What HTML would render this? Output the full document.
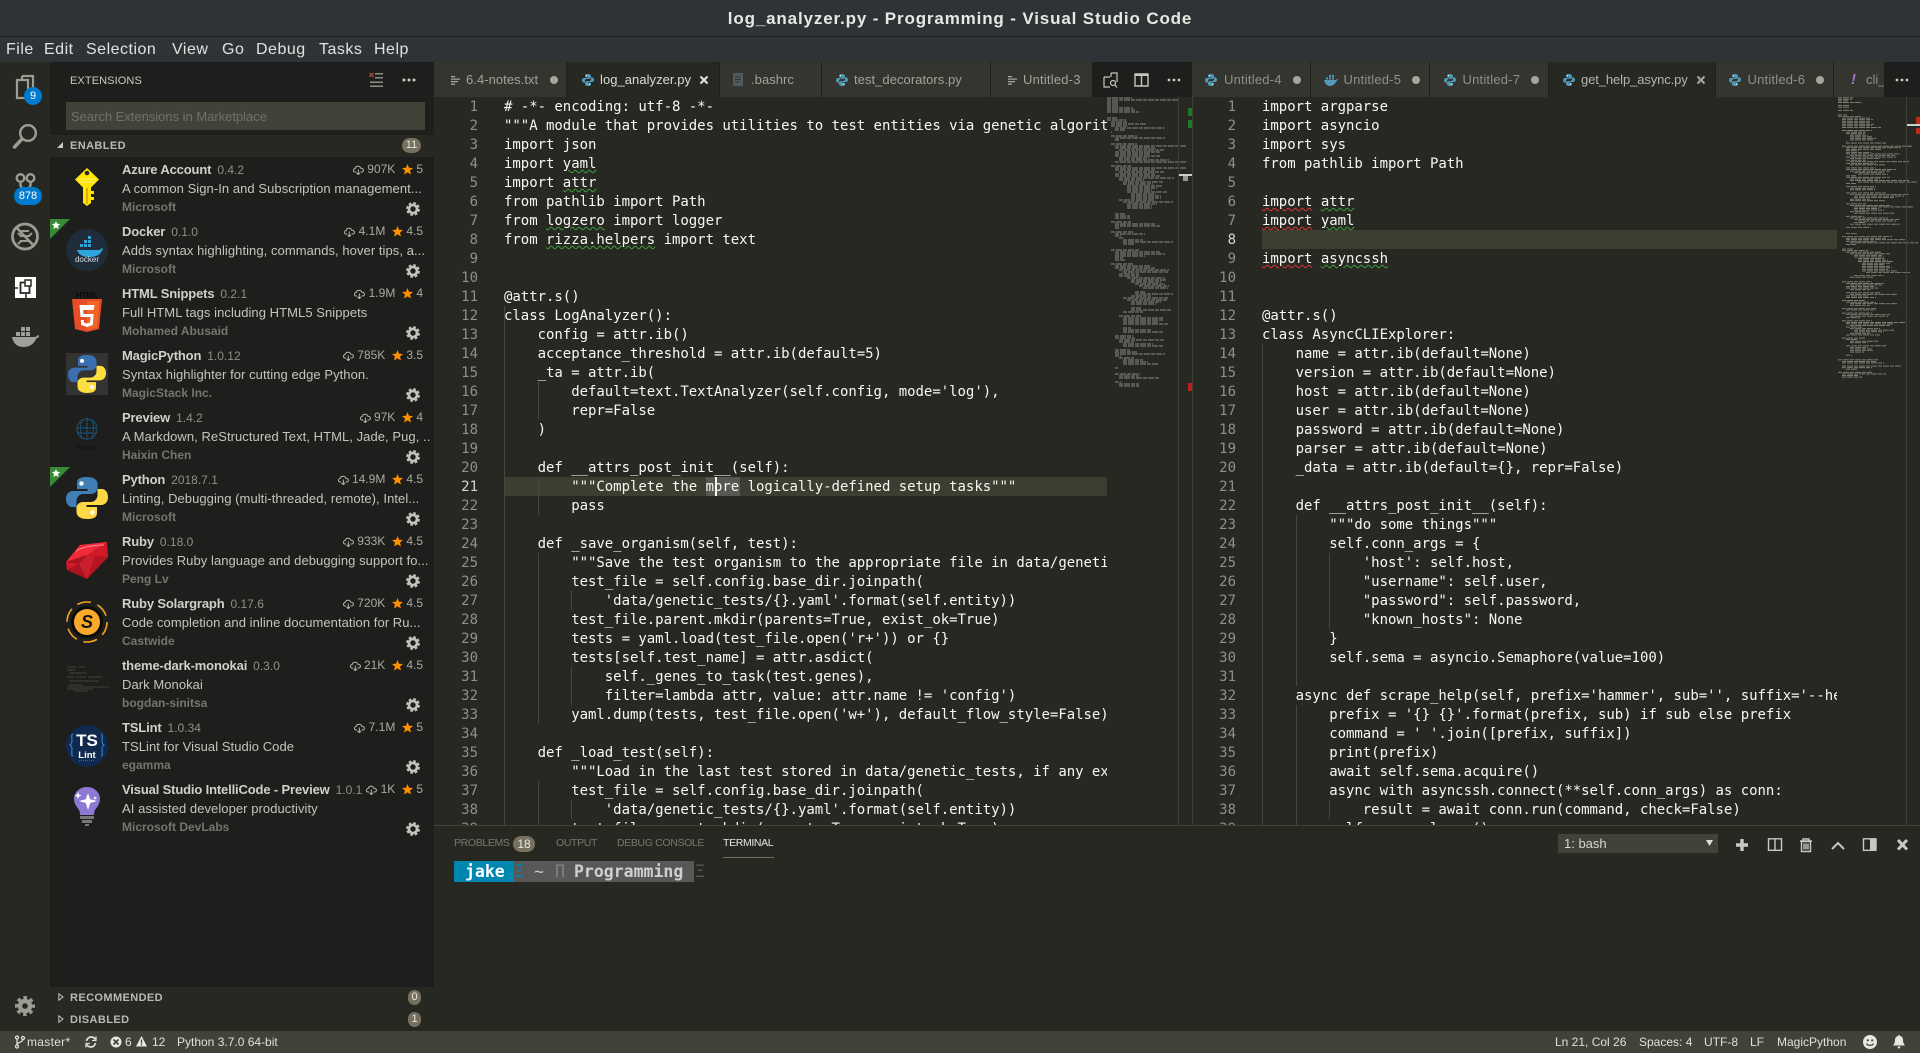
<!DOCTYPE html>
<html><head><meta charset="utf-8"><title>log_analyzer.py - Programming - Visual Studio Code</title>
<style>
*{box-sizing:border-box}
html,body{margin:0;padding:0;width:1920px;height:1053px;overflow:hidden;background:#272822;font-family:"Liberation Sans",sans-serif}
.a{position:absolute;white-space:nowrap}
svg{position:absolute;overflow:visible}
.menu{top:37px;height:25px;line-height:25px;font-size:16px;letter-spacing:.5px;color:#e0e2df}
.tab{top:62px;height:35px;background:#34352f}
.tt{top:62px;height:35px;line-height:35px;font-size:13px;color:#a3a39b;letter-spacing:.05px}
.tr{color:#90908a}
.act{background:#272822}
.dot{top:76px;width:8px;height:8px;border-radius:50%;background:#a6a69e}
.code{margin:0;font:14px/19px "DejaVu Sans Mono",monospace;color:#f8f8f2;letter-spacing:-.03px;white-space:pre}
.ln{margin:0;font:14px/19px "DejaVu Sans Mono",monospace;color:#90908a;text-align:right;white-space:pre}
.g{text-decoration:underline wavy #3f9f3f 1px;text-underline-offset:1px}
.r{text-decoration:underline wavy #d33 1px;text-underline-offset:1px}
.guide{position:absolute;width:1px;background:#464741}
.ext{position:absolute;left:50px;width:384px;height:62px}
.nm{position:absolute;left:72px;top:3px;line-height:19px;font-size:13px;font-weight:bold;color:#cfcfcb;white-space:nowrap;letter-spacing:-.15px}
.nm i{font-style:normal;font-weight:normal;font-size:12px;color:#8f8f88;margin-left:6px;letter-spacing:0}
.ds{position:absolute;left:72px;top:22px;line-height:19px;width:308px;font-size:13px;color:#c4c4bf;white-space:nowrap;overflow:hidden;letter-spacing:.06px}
.pb{position:absolute;left:72px;top:41px;line-height:19px;font-size:12px;font-weight:bold;color:#75756f;white-space:nowrap}
.st{position:absolute;right:11px;top:3px;line-height:19px;font-size:12px;color:#a9a9a3;white-space:nowrap;display:flex;align-items:center}
.st svg{position:static}
.gear{position:absolute;left:356px;top:45px}
.hd{left:70px;font-size:11px;font-weight:bold;color:#b9b9b3;letter-spacing:.4px;line-height:22px;height:22px}
.bd{border-radius:10px;background:#75715e;color:#e9e9e2;font-size:11px;text-align:center}
.sb{top:1031px;height:22px;line-height:22px;font-size:12px;color:#e0e0da}
.pt{top:834px;height:19px;line-height:19px;font-size:10.5px;letter-spacing:-.35px;color:#78786e}
.term{font:bold 16.5px/21px "DejaVu Sans Mono",monospace;top:861px;height:21px}
</style></head>
<body>
<svg width="0" height="0" style="position:absolute">
<defs>
<symbol id="py" viewBox="0 0 42 42"><path d="M21 0C11 0 11 4 11 7v5h10.500v2H7c-4 0-7 3-7 8s3 8 6 8h4.500v-6c0-4 3-7 7-7h7.500c3.500 0 6.500-2.500 6.500-6V7c0-4-3.500-7-10.500-7z"/><circle cx="15.500" cy="6.500" r="2.200" fill="#fff"/></symbol>
<symbol id="gr" viewBox="0 0 14 14"><circle cx="7" cy="7" r="5.600" fill="none" stroke="#c2c2be" stroke-width="2.600" stroke-dasharray="2.600 1.800"/><circle cx="7" cy="7" r="4" fill="none" stroke="#c2c2be" stroke-width="2.600"/></symbol>
<symbol id="cl" viewBox="0 0 11 10"><path d="M3 7H2.300C1 7 .5 6 .5 5.200S1.200 3.500 2.200 3.500C2.500 2 3.500 1.300 5 1.300S7.500 2.200 7.800 3.300C9.500 3.200 10.500 4.200 10.500 5.300S9.500 7 8.500 7H7.500M5.300 4.500V9.500M3.500 7.800L5.300 9.600 7 7.800" fill="none" stroke="#b5b5b0" stroke-width="1"/></symbol>
<symbol id="sr" viewBox="0 0 11 11"><path d="M5.500 0l1.500 3.700 4 .3-3 2.600 1 3.900-3.500-2.100L2 10.500l1-3.900L0 4l4-.3z" fill="#ff8e00"/></symbol>
<symbol id="tl" viewBox="0 0 10 10"><path d="M0 1h4v1.300H0zM0 3.500h9v1.300H0zM0 6h7v1.300H0zM0 8.500h4v1.300H0z" fill="#a8a8a0"/></symbol>
</defs>
</svg>

<!-- title and menu -->
<div class="a" style="left:0;top:0;width:1920px;height:36px;background:#2e3436"></div>
<div class="a" style="left:0;top:36px;width:1920px;height:1px;background:#1b1d1e"></div>
<div class="a" style="left:0;top:37px;width:1920px;height:25px;background:#2e3436"></div>
<div class="a" style="left:0;top:0;width:1920px;height:37px;line-height:37px;text-align:center;font-size:17px;font-weight:bold;letter-spacing:.85px;color:#e8e8e4">log_analyzer.py - Programming - Visual Studio Code</div>
<div class="a menu" style="left:6px">File</div><div class="a menu" style="left:44px">Edit</div><div class="a menu" style="left:86px">Selection</div><div class="a menu" style="left:172px">View</div><div class="a menu" style="left:222px">Go</div><div class="a menu" style="left:256px">Debug</div><div class="a menu" style="left:319px">Tasks</div><div class="a menu" style="left:374px">Help</div>

<!-- activity bar -->
<div class="a" style="left:0;top:62px;width:50px;height:969px;background:#272822"></div>
<svg style="left:0;top:62px" width="50" height="969" viewBox="0 62 50 969" fill="none" stroke="#9c9c95">
<path d="M22 76h11v20H26M22 76v4M17 80h11v18H17z" stroke-width="2.200"/>
<circle cx="28" cy="133" r="7.800" stroke-width="2.400"/><path d="M22 139l-7.500 8" stroke-width="3.500" stroke-linecap="round"/>
<circle cx="20.500" cy="178" r="3.800" stroke-width="2.400"/><circle cx="30.500" cy="178" r="3.800" stroke-width="2.400"/><path d="M20.500 181v4c0 2 2 3 3 4M30.500 181v4c0 2-2 3-3 4" stroke-width="2.400"/>
<circle cx="25" cy="236.500" r="12.500" stroke-width="2.800"/><path d="M16 227l18 19" stroke-width="2.500"/><path d="M21 231h8M20 236h10M20 241h10M18 233l3 3M32 233l-3 3M18 244l3-3M32 244l-3-3" stroke-width="2"/>
<path d="M15 277h21v21H15z" fill="#fff" stroke="none"/><path d="M20.500 282.500h9v10.500h-9z" fill="none" stroke="#272822" stroke-width="1.800"/><path d="M25 280h6v6h-6z" fill="#fff" stroke="#272822" stroke-width="1.500"/><path d="M14 288h4M26 299v-5" stroke="#272822" stroke-width="1.500"/>
<path d="M12 337h22c2 0 3-1 4-2 1 0 1 1 1 2-2 1-3 2-3.500 3-2 4-6 7-12 7-6 0-10-3-11.500-10z" fill="#a0a09a" stroke="none"/><path d="M16 332h4v4h-4zM21 332h4v4h-4zM26 332h4v4h-4zM21 327h4v4h-4zM26 327h4v4h-4z" fill="#a0a09a" stroke="none"/>
<circle cx="25" cy="1006" r="5" stroke-width="4.400"/><circle cx="25" cy="1006" r="8.300" stroke-width="3.400" stroke-dasharray="3.500 3" stroke-dashoffset="1.700"/>
</svg>
<div class="a" style="left:24px;top:87px;width:18px;height:18px;border-radius:50%;background:#007acc;color:#fff;font-size:11px;line-height:18px;text-align:center">9</div>
<div class="a" style="left:14px;top:187px;width:28px;height:18px;border-radius:9px;background:#007acc;color:#fff;font-size:11px;line-height:18px;text-align:center">878</div>

<!-- sidebar -->
<div class="a" style="left:50px;top:62px;width:384px;height:969px;background:#1e1f1c"></div>
<div class="a" style="left:70px;top:73px;font-size:11px;line-height:16px;color:#c8c8c4;letter-spacing:.1px">EXTENSIONS</div>
<svg style="left:369px;top:72px" width="15" height="16"><path d="M6 1h8v1.500H6zM6 5h8v1.500H6zM1 9.500h13V11H1zM1 13.500h13V15H1z" fill="#8e8e88"/><path d="M.5 1l4 4M4.500 1l-4 4" stroke="#a04a3c" stroke-width="1.300"/></svg>
<svg style="left:402px;top:78px" width="14" height="4"><circle cx="2" cy="2" r="1.500" fill="#c8c8c4"/><circle cx="7" cy="2" r="1.500" fill="#c8c8c4"/><circle cx="12" cy="2" r="1.500" fill="#c8c8c4"/></svg>
<div class="a" style="left:66px;top:102px;width:359px;height:28px;background:#414339;line-height:30px;font-size:13px;color:#717167;padding-left:5px;letter-spacing:-.02px">Search Extensions in Marketplace</div>
<div class="a" style="left:50px;top:135px;width:384px;height:22px;background:#272822"></div>
<svg style="left:57px;top:142px" width="7" height="7"><path d="M6 0v6H0z" fill="#c8c8c4"/></svg>
<div class="a hd" style="top:135px">ENABLED</div>
<div class="a bd" style="left:402px;top:138px;width:19px;height:15px;line-height:15px">11</div>

<div class="ext" style="top:157px"><svg style="left:16px;top:9px" width="42" height="42" viewBox="0 0 42 42"><path d="M21 2l12 11.500-8 8V37l-4 3-4-3V21.500l-8-8z" fill="#ffe600"/><path d="M25 25h3v3h-3zM25 31h3v3h-3z" fill="#ffe600"/><circle cx="21" cy="7" r="2.300" fill="#2a2a20"/><path d="M12 13h18M13 16h16" stroke="#ffef66" stroke-width="1.200"/><path d="M21 22v16" stroke="#f0a800" stroke-width="2"/></svg><div class="nm">Azure Account<i>0.4.2</i></div><div class="st"><svg width="11" height="10"><use href="#cl"/></svg>&nbsp;907K&nbsp;&nbsp;<svg width="11" height="11"><use href="#sr"/></svg>&nbsp;5</div><div class="ds">A common Sign-In and Subscription management...</div><div class="pb">Microsoft</div><svg class="gear" width="14" height="14"><use href="#gr"/></svg></div>

<div class="ext" style="top:219px"><svg style="left:16px;top:10px" width="42" height="42" viewBox="0 0 42 42"><circle cx="21" cy="21" r="21" fill="#1f2d3a"/><path d="M11 21h21c2 0 3-1 4-2 1 .5 1 1.500 0 2.500-2 5-7 6.500-13 6.500-6 0-10-2-12-7z" fill="#2ea5dc"/><path d="M14 15h3v3h-3zM18 15h3v3h-3zM22 15h3v3h-3zM18 11h3v3h-3zM22 11h3v3h-3zM22 7h3v3h-3z" fill="#2ea5dc"/><text x="21" y="33" font-family="Liberation Sans" font-size="8" fill="#d8dde2" text-anchor="middle">docker</text></svg><div class="nm">Docker<i>0.1.0</i></div><div class="st"><svg width="11" height="10"><use href="#cl"/></svg>&nbsp;4.1M&nbsp;&nbsp;<svg width="11" height="11"><use href="#sr"/></svg>&nbsp;4.5</div><div class="ds">Adds syntax highlighting, commands, hover tips, a...</div><div class="pb">Microsoft</div><svg class="gear" width="14" height="14"><use href="#gr"/></svg><svg style="left:0;top:0" width="20" height="20"><path d="M0 0h20L0 20z" fill="#388a34"/><path d="M6 2l1.200 2.800 3 .2-2.300 2 .8 3L6 8.400 3.300 10l.8-3L1.800 5l3-.2z" fill="#fff"/></svg></div>

<div class="ext" style="top:281px"><svg style="left:16px;top:10px" width="42" height="42" viewBox="66 291 42 42"><text x="87" y="298" font-family="Liberation Sans" font-size="8" font-weight="bold" fill="#0a0a0a" text-anchor="middle">HTML</text><path d="M72 299h30l-3 30-12 3-12-3z" fill="#e44d26"/><path d="M87 301v29l10-2.500 2.500-26.500z" fill="#f16529"/><path d="M94.500 305h-15l1 12h10l-.500 5.500-3 1-3-1-.200-2.500h-3l.400 5 5.800 2 5.800-2 .800-11h-10.100l-.300-4h10.500z" fill="#fff"/></svg><div class="nm">HTML Snippets<i>0.2.1</i></div><div class="st"><svg width="11" height="10"><use href="#cl"/></svg>&nbsp;1.9M&nbsp;&nbsp;<svg width="11" height="11"><use href="#sr"/></svg>&nbsp;4</div><div class="ds">Full HTML tags including HTML5 Snippets</div><div class="pb">Mohamed Abusaid</div><svg class="gear" width="14" height="14"><use href="#gr"/></svg></div>

<div class="ext" style="top:343px"><div style="position:absolute;left:16px;top:10px;width:42px;height:42px;background:#333"></div><svg style="left:18px;top:12px" width="38" height="38" viewBox="0 0 42 42"><use href="#py" width="42" height="42" fill="#3a6fb0"/><g transform="rotate(180 21 21)"><use href="#py" width="42" height="42" fill="#ffdf3f"/></g></svg><div class="nm">MagicPython<i>1.0.12</i></div><div class="st"><svg width="11" height="10"><use href="#cl"/></svg>&nbsp;785K&nbsp;&nbsp;<svg width="11" height="11"><use href="#sr"/></svg>&nbsp;3.5</div><div class="ds">Syntax highlighter for cutting edge Python.</div><div class="pb">MagicStack Inc.</div><svg class="gear" width="14" height="14"><use href="#gr"/></svg></div>

<div class="ext" style="top:405px"><svg style="left:16px;top:10px" width="42" height="42" viewBox="0 0 42 42"><g fill="none" stroke="#17669c" stroke-width="1.200" stroke-dasharray="1.500 1"><circle cx="21" cy="14" r="10"/><path d="M11 13h20M12 18h18M21 3v22M16 5c-2 5-2 13 0 19M26 5c2 5 2 13 0 19"/></g><text x="21" y="35" font-family="Liberation Serif" font-size="7" fill="#101010" text-anchor="middle">Preview</text></svg><div class="nm">Preview<i>1.4.2</i></div><div class="st"><svg width="11" height="10"><use href="#cl"/></svg>&nbsp;97K&nbsp;&nbsp;<svg width="11" height="11"><use href="#sr"/></svg>&nbsp;4</div><div class="ds">A Markdown, ReStructured Text, HTML, Jade, Pug, ...</div><div class="pb">Haixin Chen</div><svg class="gear" width="14" height="14"><use href="#gr"/></svg></div>

<div class="ext" style="top:467px"><svg style="left:16px;top:10px" width="42" height="42" viewBox="0 0 42 42"><use href="#py" width="42" height="42" fill="#3f7fb5"/><g transform="rotate(180 21 21)"><use href="#py" width="42" height="42" fill="#ffd845"/></g></svg><div class="nm">Python<i>2018.7.1</i></div><div class="st"><svg width="11" height="10"><use href="#cl"/></svg>&nbsp;14.9M&nbsp;&nbsp;<svg width="11" height="11"><use href="#sr"/></svg>&nbsp;4.5</div><div class="ds">Linting, Debugging (multi-threaded, remote), Intel...</div><div class="pb">Microsoft</div><svg class="gear" width="14" height="14"><use href="#gr"/></svg><svg style="left:0;top:0" width="20" height="20"><path d="M0 0h20L0 20z" fill="#388a34"/><path d="M6 2l1.200 2.800 3 .2-2.300 2 .8 3L6 8.400 3.300 10l.8-3L1.800 5l3-.2z" fill="#fff"/></svg></div>

<div class="ext" style="top:529px"><svg style="left:16px;top:10px" width="42" height="42" viewBox="0 0 42 42"><path d="M14 6L41 3l1 15-21 22L1 31 0 23z" fill="#d01a2a"/><path d="M14 6l7 10 20-13zM0 23l21-7-7-10z" fill="#f02a38"/><path d="M21 16l21 2-21 22z" fill="#b51522"/><path d="M1 31l20 9-8-15zM0 23l13 2 8-9z" fill="#a81420"/><path d="M13 25l8 15 8-23-8-1z" fill="#c9202c"/><path d="M10 12c6-4 18-6 28-6" fill="none" stroke="#ff8a8a" stroke-width="1"/></svg><div class="nm">Ruby<i>0.18.0</i></div><div class="st"><svg width="11" height="10"><use href="#cl"/></svg>&nbsp;933K&nbsp;&nbsp;<svg width="11" height="11"><use href="#sr"/></svg>&nbsp;4.5</div><div class="ds">Provides Ruby language and debugging support fo...</div><div class="pb">Peng Lv</div><svg class="gear" width="14" height="14"><use href="#gr"/></svg></div>

<div class="ext" style="top:591px"><svg style="left:16px;top:10px" width="42" height="42" viewBox="0 0 42 42"><circle cx="21" cy="21" r="20" fill="none" stroke="#f5a623" stroke-width="1.600" stroke-dasharray="14 7"/><circle cx="21" cy="21" r="16" fill="#0c0c0c"/><circle cx="21" cy="21" r="13" fill="#f9aa2c"/><text x="21" y="27" font-family="Liberation Sans" font-size="18" font-weight="bold" font-style="italic" fill="#111" text-anchor="middle">S</text></svg><div class="nm">Ruby Solargraph<i>0.17.6</i></div><div class="st"><svg width="11" height="10"><use href="#cl"/></svg>&nbsp;720K&nbsp;&nbsp;<svg width="11" height="11"><use href="#sr"/></svg>&nbsp;4.5</div><div class="ds">Code completion and inline documentation for Ru...</div><div class="pb">Castwide</div><svg class="gear" width="14" height="14"><use href="#gr"/></svg></div>

<div class="ext" style="top:653px"><svg style="left:16px;top:10px" width="42" height="42" viewBox="0 0 42 42" stroke-width="1" fill="none"><path d="M1 4h10M13 4h6M1 7h8M3 10h18M1 14h7M10 14h10M22 14h14M3 18h30M3 22h14M1 26h26" stroke="#4a3c3a"/><path d="M1 24h42M8 28h14" stroke="#3d4034"/></svg><div class="nm">theme-dark-monokai<i>0.3.0</i></div><div class="st"><svg width="11" height="10"><use href="#cl"/></svg>&nbsp;21K&nbsp;&nbsp;<svg width="11" height="11"><use href="#sr"/></svg>&nbsp;4.5</div><div class="ds">Dark Monokai</div><div class="pb">bogdan-sinitsa</div><svg class="gear" width="14" height="14"><use href="#gr"/></svg></div>

<div class="ext" style="top:715px"><svg style="left:16px;top:10px" width="42" height="42" viewBox="0 0 42 42"><circle cx="21" cy="21" r="21" fill="#10294f"/><text x="21" y="21" font-family="Liberation Sans" font-size="17" font-weight="bold" fill="#fff" text-anchor="middle">TS</text><text x="21" y="33" font-family="Liberation Sans" font-size="9.500" font-weight="bold" fill="#fff" text-anchor="middle">Lint</text><path d="M13 35.500h16" stroke="#d22" stroke-width="1.200" stroke-dasharray="1 1"/><path d="M7 9c-2 0-1 4-1 7s-2 4-2 4 2 1 2 4-1 7 1 7M35 9c2 0 1 4 1 7s2 4 2 4-2 1-2 4 1 7-1 7" stroke="#3a90c8" fill="none" stroke-width="1"/></svg><div class="nm">TSLint<i>1.0.34</i></div><div class="st"><svg width="11" height="10"><use href="#cl"/></svg>&nbsp;7.1M&nbsp;&nbsp;<svg width="11" height="11"><use href="#sr"/></svg>&nbsp;5</div><div class="ds">TSLint for Visual Studio Code</div><div class="pb">egamma</div><svg class="gear" width="14" height="14"><use href="#gr"/></svg></div>

<div class="ext" style="top:777px"><svg style="left:16px;top:10px" width="42" height="42" viewBox="0 0 42 42"><path d="M21 0c8 0 13 6 13 12 0 5-3 8-5 11-1 2-1 4-1 5H14c0-1 0-3-1-5-2-3-5-6-5-11C8 6 13 0 21 0z" fill="#8d78d4"/><path d="M14 29h14v3H14zM16 33h10v3H16zM19 37h4v2h-4z" fill="#777"/><path d="M22 6l2.200 6.300L31 14l-6.800 2L22 23l-2.200-7-6.800-2 6.800-1.700z" fill="#fff"/><path d="M12 5l1 2.500L15.500 8.500 13 9.500l-1 2.500-1-2.500-2.500-1 2.500-1zM29 9l.6 1.400L31 11l-1.400.6L29 13l-.6-1.400L27 11l1.400-.6z" fill="#fff"/></svg><div class="nm">Visual Studio IntelliCode - Preview<i>1.0.1</i></div><div class="st"><svg width="11" height="10"><use href="#cl"/></svg>&nbsp;1K&nbsp;&nbsp;<svg width="11" height="11"><use href="#sr"/></svg>&nbsp;5</div><div class="ds">AI assisted developer productivity</div><div class="pb">Microsoft DevLabs</div><svg class="gear" width="14" height="14"><use href="#gr"/></svg></div>

<div class="a" style="left:50px;top:987px;width:384px;height:44px;background:#272822"></div>
<svg style="left:58px;top:993px" width="6" height="8"><path d="M.8.800L5 4 .8 7.200z" fill="#272822" stroke="#c0c0ba" stroke-width="1"/></svg>
<svg style="left:58px;top:1015px" width="6" height="8"><path d="M.8.800L5 4 .8 7.200z" fill="#272822" stroke="#c0c0ba" stroke-width="1"/></svg>
<div class="a hd" style="top:987px">RECOMMENDED</div><div class="a hd" style="top:1009px">DISABLED</div>
<div class="a bd" style="left:408px;top:990px;width:13px;height:15px;line-height:15px">0</div>
<div class="a bd" style="left:408px;top:1012px;width:13px;height:15px;line-height:15px">1</div>

<!-- tab strip -->
<div class="a" style="left:434px;top:62px;width:1486px;height:35px;background:#1e1f1c"></div>
<div class="a tab" style="left:434px;width:132px"></div>
<div class="a tab act" style="left:567px;width:152px"></div>
<div class="a tab" style="left:720px;width:101px"></div>
<div class="a tab" style="left:822px;width:168px"></div>
<div class="a tab" style="left:991px;width:101px"></div>
<div class="a tab" style="left:1192px;width:118px"></div>
<div class="a tab" style="left:1311px;width:118px"></div>
<div class="a tab" style="left:1430px;width:118px"></div>
<div class="a tab act" style="left:1549px;width:166px"></div>
<div class="a tab" style="left:1716px;width:117px"></div>
<div class="a tab" style="left:1834px;width:50px"></div>

<svg style="left:451px;top:75px" width="10" height="10"><use href="#tl"/></svg>
<div class="a tt" style="left:466px">6.4-notes.txt</div><div class="a dot" style="left:550px"></div>
<svg style="left:582px;top:74px" width="12" height="12" viewBox="0 0 42 42"><use href="#py" width="42" height="42" fill="#519aba"/><g transform="rotate(180 21 21)"><use href="#py" width="42" height="42" fill="#519aba"/></g></svg>
<div class="a tt" style="left:600px;color:#dcdcd6">log_analyzer.py</div>
<svg style="left:699px;top:75px" width="10" height="10"><path d="M1.500 1.500l7 7M8.500 1.500l-7 7" stroke="#e8e8e4" stroke-width="2"/></svg>
<svg style="left:733px;top:73px" width="10" height="13"><path d="M0 0h10v13H0z" fill="#4d5a5e"/><path d="M2 4h6M2 6.500h6M2 9h4" stroke="#2f3436"/></svg>
<div class="a tt" style="left:751px">.bashrc</div>
<svg style="left:836px;top:74px" width="12" height="12" viewBox="0 0 42 42"><use href="#py" width="42" height="42" fill="#519aba"/><g transform="rotate(180 21 21)"><use href="#py" width="42" height="42" fill="#519aba"/></g></svg>
<div class="a tt" style="left:854px">test_decorators.py</div>
<svg style="left:1008px;top:75px" width="10" height="10"><use href="#tl"/></svg>
<div class="a tt" style="left:1023px;letter-spacing:.2px">Untitled-3</div>
<svg style="left:1103px;top:72px" width="15" height="16" fill="none" stroke="#c5c5bf" stroke-width="1.200"><path d="M8 1h6v9M8 1v4M1 5h6M1 5v10h6"/><circle cx="10" cy="11" r="2.500"/><path d="M12 13l2 2.500"/></svg>
<svg style="left:1134px;top:73px" width="15" height="14" fill="none" stroke="#c5c5bf" stroke-width="1.400"><path d="M1 1h13v12H1zM7.500 1v12"/><path d="M1 2h13" stroke-width="2"/></svg>
<svg style="left:1167px;top:78px" width="14" height="4" fill="#c8c8c4"><circle cx="2" cy="2" r="1.400"/><circle cx="7" cy="2" r="1.400"/><circle cx="12" cy="2" r="1.400"/></svg>

<svg style="left:1205px;top:74px" width="12" height="12" viewBox="0 0 42 42"><use href="#py" width="42" height="42" fill="#519aba"/><g transform="rotate(180 21 21)"><use href="#py" width="42" height="42" fill="#519aba"/></g></svg>
<div class="a tt tr" style="left:1224px;letter-spacing:.2px">Untitled-4</div><div class="a dot" style="left:1293px"></div>
<svg style="left:1324px;top:74px" width="14" height="12" viewBox="0 0 14 12"><path d="M0 6h11c1 0 2-1 2.500-1.500l.5 1c-1 1-1.500 1.500-2 2.500-1 2-3 4-6 4S1 10 0 6z" fill="#519aba"/><path d="M2 3.500h2V5.500H2zM5 3.500h2V5.500H5zM8 3.500h2V5.500H8zM5 1h2v2H5zM8 1h2v2H8z" fill="#519aba"/></svg>
<div class="a tt tr" style="left:1343.500px;letter-spacing:.2px">Untitled-5</div><div class="a dot" style="left:1412px"></div>
<svg style="left:1444px;top:74px" width="12" height="12" viewBox="0 0 42 42"><use href="#py" width="42" height="42" fill="#519aba"/><g transform="rotate(180 21 21)"><use href="#py" width="42" height="42" fill="#519aba"/></g></svg>
<div class="a tt tr" style="left:1462.500px;letter-spacing:.2px">Untitled-7</div><div class="a dot" style="left:1531px"></div>
<svg style="left:1563px;top:74px" width="12" height="12" viewBox="0 0 42 42"><use href="#py" width="42" height="42" fill="#519aba"/><g transform="rotate(180 21 21)"><use href="#py" width="42" height="42" fill="#519aba"/></g></svg>
<div class="a tt" style="left:1581px;color:#b5b5ae;letter-spacing:-.1px">get_help_async.py</div>
<svg style="left:1696px;top:75px" width="10" height="10"><path d="M1.500 1.500l7 7M8.500 1.500l-7 7" stroke="#a8a8a2" stroke-width="2"/></svg>
<svg style="left:1729px;top:74px" width="12" height="12" viewBox="0 0 42 42"><use href="#py" width="42" height="42" fill="#519aba"/><g transform="rotate(180 21 21)"><use href="#py" width="42" height="42" fill="#519aba"/></g></svg>
<div class="a tt tr" style="left:1747.500px;letter-spacing:.2px">Untitled-6</div><div class="a dot" style="left:1816px"></div>
<div class="a tt" style="left:1851px;color:#a074c4;font-weight:bold;font-size:15px;font-style:italic">!</div>
<div class="a" style="left:1866px;top:62px;width:18px;height:35px;overflow:hidden;line-height:35px;font-size:13px;color:#90908a">cli_</div>
<svg style="left:1895px;top:78px" width="14" height="4" fill="#c8c8c4"><circle cx="2" cy="2" r="1.400"/><circle cx="7" cy="2" r="1.400"/><circle cx="12" cy="2" r="1.400"/></svg>

<!-- left editor -->
<div class="a" style="left:504px;top:477px;width:603px;height:19px;background:#3e3d32"></div>
<div class="a" style="left:706px;top:477px;width:34px;height:19px;background:#575851"></div>
<div class="guide" style="left:504px;top:306px;height:519px"></div>
<div class="guide" style="left:538px;top:382px;height:38px"></div>
<div class="guide" style="left:538px;top:477px;height:38px"></div>
<div class="guide" style="left:538px;top:553px;height:171px"></div>
<div class="guide" style="left:538px;top:781px;height:44px"></div>
<div class="guide" style="left:571px;top:591px;height:19px"></div>
<div class="guide" style="left:571px;top:667px;height:38px"></div>
<div class="guide" style="left:571px;top:800px;height:19px"></div>
<pre class="ln a" style="left:440px;top:98px;width:38px;height:727px;overflow:hidden">1
2
3
4
5
6
7
8
9
10
11
12
13
14
15
16
17
18
19
20
<span style="color:#d4d4d0">21</span>
22
23
24
25
26
27
28
29
30
31
32
33
34
35
36
37
38
39</pre>
<pre class="code a" style="left:504px;top:98px;width:603px;height:727px;overflow:hidden"># -*- encoding: utf-8 -*-
"""A module that provides utilities to test entities via genetic algorithms."""
import json
import <span class="g">yaml</span>
import <span class="g">attr</span>
from pathlib import Path
from <span class="g">logzero</span> import logger
from <span class="g">rizza.helpers</span> import text


@attr.s()
class LogAnalyzer():
    config = attr.ib()
    acceptance_threshold = attr.ib(default=5)
    _ta = attr.ib(
        default=text.TextAnalyzer(self.config, mode='log'),
        repr=False
    )

    def __attrs_post_init__(self):
        """Complete the more logically-defined setup tasks"""
        pass

    def _save_organism(self, test):
        """Save the test organism to the appropriate file in data/genetic_tests."""
        test_file = self.config.base_dir.joinpath(
            'data/genetic_tests/{}.yaml'.format(self.entity))
        test_file.parent.mkdir(parents=True, exist_ok=True)
        tests = yaml.load(test_file.open('r+')) or {}
        tests[self.test_name] = attr.asdict(
            self._genes_to_task(test.genes),
            filter=lambda attr, value: attr.name != 'config')
        yaml.dump(tests, test_file.open('w+'), default_flow_style=False)

    def _load_test(self):
        """Load in the last test stored in data/genetic_tests, if any exists."""
        test_file = self.config.base_dir.joinpath(
            'data/genetic_tests/{}.yaml'.format(self.entity))
        test_file.parent.mkdir(parents=True, exist_ok=True)</pre>
<div class="a" style="left:715px;top:477px;width:2px;height:19px;background:#f8f8f0"></div>

<!-- left minimap -->
<svg style="left:1107px;top:97px" width="71" height="728" viewBox="1107 97 71 728"><path fill="none" stroke="#d8d8d0" stroke-opacity=".55" stroke-width="1.100" stroke-dasharray="4 1 6 1" d="M1107 98h25M1107 100h71M1107 102h11M1107 104h11M1107 106h11M1107 108h26M1107 110h29M1107 112h32M1107 118h10M1107 120h19M1111 122h17M1111 124h35M1111 126h16M1115 128h50M1115 130h10M1111 132h1M1111 136h26M1115 138h50M1115 140h4M1111 144h26M1115 146h71M1115 148h40M1119 150h45M1115 152h45M1115 154h35M1115 156h45M1119 158h30M1119 160h50M1115 162h71M1111 166h20M1115 168h71M1115 170h40M1119 172h45M1115 174h40M1115 176h45M1119 178h55M1119 180h25M1123 182h40M1123 184h30M1127 186h35M1127 188h30M1127 190h25M1127 192h40M1131 194h25M1131 196h30M1131 198h30M1119 200h35M1123 202h50M1127 204h30M1127 206h25M1127 208h25M1115 214h10M1115 216h15M1115 218h15M1111 222h20M1115 224h40M1115 226h45M1115 228h5M1111 232h22M1115 234h30M1115 236h6M1119 238h4M1123 240h20M1123 242h50M1123 244h12M1111 250h28M1115 252h45M1115 254h50M1115 256h30M1115 258h8M1115 260h10M1111 264h22M1115 266h35M1115 268h40M1119 270h50M1123 272h45M1119 274h20M1119 276h20M1127 278h38M1131 280h35M1131 282h30M1135 284h30M1139 286h30M1143 288h25M1135 292h10M1135 294h38M1131 296h20M1123 298h45M1127 300h40M1131 302h30M1131 304h25M1131 308h10M1131 310h40M1123 312h20M1119 316h22M1123 318h40M1123 320h40M1123 322h35M1123 324h45M1123 328h8M1123 330h28M1123 332h40M1115 336h18M1115 338h20M1119 340h45M1119 342h15M1123 344h30M1123 346h40M1115 350h15M1115 352h22M1115 354h50M1115 356h6M1119 358h15M1123 360h20M1123 362h25M1123 364h35M1115 368h3M1115 374h25M1119 376h20M1119 378h40M1115 382h6M1119 384h20M1119 386h20"/></svg>
<div class="a" style="left:1178px;top:97px;width:1px;height:728px;background:#3e3f39"></div>
<div class="a" style="left:1192px;top:97px;width:1px;height:728px;background:#3e3f39"></div>
<div class="a" style="left:1188px;top:108px;width:4px;height:8px;background:#1b7a28"></div>
<div class="a" style="left:1188px;top:120px;width:4px;height:8px;background:#1b7a28"></div>
<div class="a" style="left:1188px;top:383px;width:4px;height:8px;background:#bf1b1b"></div>
<div class="a" style="left:1179px;top:174px;width:13px;height:2px;background:#cfcfca"></div>
<div class="a" style="left:1183px;top:176px;width:5px;height:5px;background:#999"></div>

<!-- right editor -->
<div class="a" style="left:1262px;top:230px;width:575px;height:19px;background:#3e3d32"></div>
<div class="guide" style="left:1262px;top:344px;height:481px"></div>
<div class="guide" style="left:1296px;top:515px;height:171px"></div>
<div class="guide" style="left:1296px;top:705px;height:120px"></div>
<div class="guide" style="left:1329px;top:553px;height:76px"></div>
<div class="guide" style="left:1329px;top:800px;height:19px"></div>
<pre class="ln a" style="left:1198px;top:98px;width:38px;height:727px;overflow:hidden">1
2
3
4
5
6
7
<span style="color:#d4d4d0">8</span>
9
10
11
12
13
14
15
16
17
18
19
20
21
22
23
24
25
26
27
28
29
30
31
32
33
34
35
36
37
38
39</pre>
<pre class="code a" style="left:1262px;top:98px;width:575px;height:727px;overflow:hidden">import argparse
import asyncio
import sys
from pathlib import Path

<span class="r">import</span> <span class="g">attr</span>
<span class="r">import</span> <span class="g">yaml</span>

<span class="r">import</span> <span class="g">asyncssh</span>


@attr.s()
class AsyncCLIExplorer:
    name = attr.ib(default=None)
    version = attr.ib(default=None)
    host = attr.ib(default=None)
    user = attr.ib(default=None)
    password = attr.ib(default=None)
    parser = attr.ib(default=None)
    _data = attr.ib(default={}, repr=False)

    def __attrs_post_init__(self):
        """do some things"""
        self.conn_args = {
            'host': self.host,
            "username": self.user,
            "password": self.password,
            "known_hosts": None
        }
        self.sema = asyncio.Semaphore(value=100)

    async def scrape_help(self, prefix='hammer', sub='', suffix='--help'):
        prefix = '{} {}'.format(prefix, sub) if sub else prefix
        command = ' '.join([prefix, suffix])
        print(prefix)
        await self.sema.acquire()
        async with asyncssh.connect(**self.conn_args) as conn:
            result = await conn.run(command, check=False)
        self.sema.release()</pre>

<!-- right minimap -->
<svg style="left:1838px;top:97px" width="68" height="728" viewBox="1838 97 68 728"><path transform="translate(0 97) scale(1 .78) translate(0 -97)" fill="none" stroke="#d8d8d0" stroke-opacity=".55" stroke-width="1.100" stroke-dasharray="4 1 6 1" d="M1838 98h15M1838 100h14M1838 102h10M1838 104h24M1838 108h11M1838 110h11M1838 114h15M1838 120h9M1838 122h23M1842 124h28M1842 126h31M1842 128h28M1842 130h28M1842 132h32M1842 134h30M1842 136h39M1842 140h30M1846 142h20M1846 144h19M1850 146h18M1850 148h22M1850 150h26M1850 152h23M1846 154h1M1846 156h40M1842 160h70M1846 162h55M1846 164h35M1846 166h13M1846 168h25M1846 170h54M1850 172h45M1846 174h50M1850 176h30M1846 178h20M1850 180h60M1846 182h30M1850 184h35M1846 188h30M1846 190h50M1850 192h40M1854 194h30M1858 196h30M1846 198h10M1846 200h44M1850 202h30M1850 204h60M1858 206h60M1846 208h10M1846 212h30M1850 214h25M1850 216h25M1846 220h40M1850 222h60M1854 224h50M1854 226h40M1850 228h20M1850 230h35M1846 234h20M1850 236h40M1854 238h60M1854 240h25M1854 242h30M1850 244h18M1854 246h40M1846 250h18M1850 252h38M1854 254h45M1858 256h38M1854 258h12M1850 260h50M1846 264h25M1846 272h12M1842 276h50M1846 278h40M1846 280h60M1846 282h30M1850 284h68M1846 286h10M1842 292h12M1842 294h26M1846 296h35M1850 298h40M1854 300h28M1854 302h30M1858 304h26M1858 306h30M1858 308h36M1862 310h28M1862 312h22M1862 314h28M1862 316h30M1862 318h26M1862 320h36M1866 322h44M1854 326h30M1850 328h24M1842 334h30M1846 336h38M1850 338h32M1846 340h28M1846 342h32M1850 344h20M1846 348h34M1850 350h48M1846 352h22M1846 354h30M1842 358h24M1846 360h30M1850 362h48M1850 364h20M1842 368h34M1846 370h30M1842 374h30M1846 376h44M1850 378h38M1846 380h14M1842 384h30M1846 386h60M1846 388h48M1850 390h40M1846 392h16M1850 394h30M1854 396h40M1854 398h30M1850 400h20M1846 402h34M1842 406h24M1846 408h12M1850 410h28M1850 412h18M1846 416h40M1850 418h18M1850 420h22M1850 422h24M1850 424h14M1846 428h6M1838 434h40M1842 436h34M1842 438h42M1842 442h60M1842 444h30M1846 446h12M1838 450h34M1842 452h44M1842 454h16M1842 456h20"/></svg>
<div class="a" style="left:1906px;top:97px;width:1px;height:728px;background:#3e3f39"></div>
<div class="a" style="left:1916px;top:117px;width:4px;height:8px;background:#bf2a1b"></div>
<div class="a" style="left:1916px;top:128px;width:4px;height:6px;background:#bf2a1b"></div>
<div class="a" style="left:1907px;top:124px;width:13px;height:2px;background:#cfcfca"></div>

<!-- panel -->
<div class="a" style="left:434px;top:825px;width:1486px;height:206px;background:#272822;border-top:1px solid #414339"></div>
<div class="a pt" style="left:454px">PROBLEMS</div>
<div class="a bd" style="left:513px;top:836px;width:22px;height:16px;line-height:16px;font-size:12px">18</div>
<div class="a pt" style="left:556px">OUTPUT</div>
<div class="a pt" style="left:617px">DEBUG CONSOLE</div>
<div class="a pt" style="left:723px;color:#e7e7e2">TERMINAL</div>
<div class="a" style="left:723px;top:857px;width:51px;height:1px;background:#75715e"></div>
<div class="a" style="left:454px;top:861px;width:60px;height:21px;background:#0087af"></div>
<div class="a" style="left:514px;top:861px;width:180px;height:21px;background:#585858"></div>
<div class="a term" style="left:465px;color:#fff">jake</div>
<div class="a term" style="left:514px;font-weight:normal;color:#0087af">Ξ</div>
<div class="a term" style="left:534px;font-weight:normal;color:#c6c6c6">~</div>
<div class="a term" style="left:555px;font-weight:normal;color:#808080">Π</div>
<div class="a term" style="left:574px;color:#d0d0d0">Programming</div>
<div class="a term" style="left:695px;font-weight:normal;color:#585858">Ξ</div>
<div class="a" style="left:1558px;top:834px;width:160px;height:19px;background:#414339;color:#d8d8d2;font-size:13px;line-height:19px;padding-left:6px">1: bash</div>
<svg style="left:1706px;top:840px" width="8" height="7"><path d="M0 0h7L3.500 6z" fill="#e0e0da"/></svg>
<svg style="left:1736px;top:838px" width="176" height="14" fill="none" stroke="#c8c8c4">
<path d="M0 7h12M6 1v12" stroke-width="3.400"/>
<path d="M32.500 .8h13v11.500h-13zM39 .8v11.500" stroke-width="1.400"/>
<path d="M64 3h12M67 3V1h6v2M65.500 3.500v10h9v-10zM68 5.500v6M70 5.500v6M72 5.500v6" stroke-width="1.400"/>
<path d="M96 11l6-6 6 6" stroke-width="2"/>
<path d="M127.500 .8h12.500v11.500h-12.500z" stroke-width="1.400"/><path d="M134 1h6v11h-6z" fill="#c8c8c4" stroke="none"/>
<path d="M162 2l9 9.500M171 2l-9 9.500" stroke-width="3"/>
</svg>

<!-- status bar -->
<div class="a" style="left:0;top:1031px;width:1920px;height:22px;background:#414339"></div>
<svg style="left:14px;top:1035px" width="11" height="14" fill="none" stroke="#e0e0da" stroke-width="1.300"><circle cx="3" cy="2.500" r="1.500"/><circle cx="3" cy="11.500" r="1.500"/><circle cx="9" cy="3" r="1.500"/><path d="M3 4v6M9 4.500C9 7 4 7 3 9.500"/></svg>
<div class="a sb" style="left:27px;letter-spacing:.3px">master*</div>
<svg style="left:85px;top:1036px" width="12" height="12" fill="none" stroke="#e0e0da" stroke-width="1.700"><path d="M1.500 5C2 2.500 4 1 6 1c2 0 3.500 1 4.200 2.500M10.500 7C10 9.500 8 11 6 11 4 11 2.500 10 1.800 8.500"/><path d="M11 .5V4.500H7M1 11.500V7.500H5" stroke-width="1.300"/></svg>
<svg style="left:110px;top:1036px" width="12" height="12"><circle cx="6" cy="6" r="5.500" fill="#e8e8e2"/><path d="M3.500 3.500l5 5M8.500 3.500l-5 5" stroke="#414339" stroke-width="1.700"/></svg>
<div class="a sb" style="left:125px">6</div>
<svg style="left:136px;top:1036px" width="11" height="11"><path d="M5.500 0L11 10.500H0z" fill="#e8e8e2"/><path d="M5.500 3.500v4M5.500 8.300v1.200" stroke="#414339" stroke-width="1.200"/></svg>
<div class="a sb" style="left:152px">12</div>
<div class="a sb" style="left:177px">Python 3.7.0 64-bit</div>
<div class="a sb" style="left:1555px">Ln 21, Col 26</div>
<div class="a sb" style="left:1639px">Spaces: 4</div>
<div class="a sb" style="left:1704px">UTF-8</div>
<div class="a sb" style="left:1750px">LF</div>
<div class="a sb" style="left:1777px">MagicPython</div>
<svg style="left:1863px;top:1035px" width="14" height="14"><circle cx="7" cy="7" r="7" fill="#e8e8e2"/><circle cx="4.800" cy="5.300" r="1.100" fill="#414339"/><circle cx="9.200" cy="5.300" r="1.100" fill="#414339"/><path d="M3.500 8.500c1 2.500 6 2.500 7 0" fill="none" stroke="#414339" stroke-width="1.200"/></svg>
<svg style="left:1893px;top:1035px" width="12" height="14"><path d="M6 0c.8 0 1 .5 1 1 2 .5 3 2 3 4 0 3 1 4 2 5.500H0C1 9 2 8 2 5c0-2 1-3.500 3-4 0-.5.200-1 1-1zM4.500 11.500h3c0 1-.7 2-1.500 2s-1.500-1-1.500-2z" fill="#e8e8e2"/></svg>
</body></html>
